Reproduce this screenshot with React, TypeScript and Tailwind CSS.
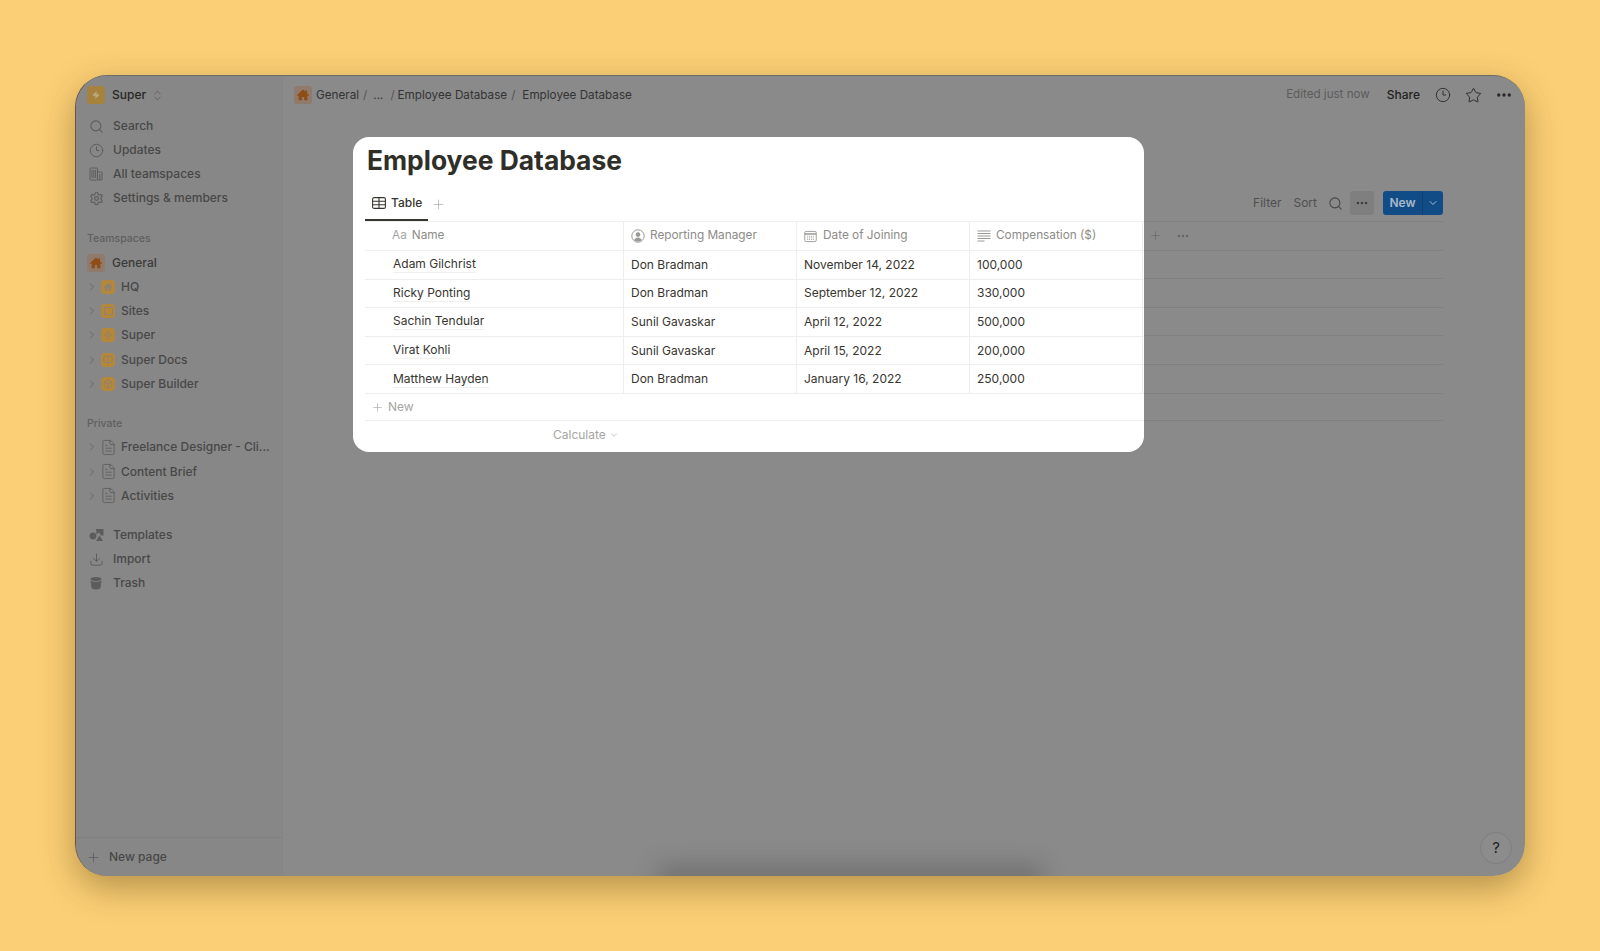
import type { ReactNode } from "react";
import {
  BookOpen,
  Box,
  ChevronDown,
  ChevronRight,
  ChevronsUpDown,
  Clock3,
  Download,
  Ellipsis,
  FileText,
  Plus,
  Search,
  Settings,
  Star,
  Zap,
} from "lucide-react";

const TEAMSPACES = [
  { name: "HQ", icon: "home" },
  { name: "Sites", icon: "square" },
  { name: "Super", icon: "zap" },
  { name: "Super Docs", icon: "book" },
  { name: "Super Builder", icon: "box" },
];

const EMPLOYEES = [
  { name: "Adam Gilchrist", manager: "Don Bradman", joined: "November 14, 2022", pay: "100,000" },
  { name: "Ricky Ponting", manager: "Don Bradman", joined: "September 12, 2022", pay: "330,000" },
  { name: "Sachin Tendular", manager: "Sunil Gavaskar", joined: "April 12, 2022", pay: "500,000" },
  { name: "Virat Kohli", manager: "Sunil Gavaskar", joined: "April 15, 2022", pay: "200,000" },
  { name: "Matthew Hayden", manager: "Don Bradman", joined: "January 16, 2022", pay: "250,000" },
];

function HomeGlyph({ className }: { className: string }) {
  return (
    <svg viewBox="0 0 16 16" className={className} fill="currentColor">
      <path d="M8 1.6 1 8.2l.9 1 1.1-1V14h3.700v-3.600h2.600V14H13V8.200l1.100 1 .9-1-2.400-2.300V2.500h-1.800v1.700z" />
    </svg>
  );
}

function HomeTile() {
  return (
    <span className="flex h-[18px] w-[18px] shrink-0 items-center justify-center rounded-[3px] bg-[#8f7a6c]">
      <HomeGlyph className="h-[14px] w-[14px] text-[#8f4c14]" />
    </span>
  );
}

function TeamIcon({ kind }: { kind: string }) {
  return (
    <span className="flex h-[14px] w-[14px] shrink-0 items-center justify-center rounded-[4px] bg-[#b58839] text-[#8c8172]">
      {kind === "home" && <HomeGlyph className="h-[10px] w-[10px]" />}
      {kind === "square" && <span className="h-[8px] w-[9px] rounded-[1px] border-[1.5px] border-[#8c8172]" />}
      {kind === "zap" && <Zap className="h-[10px] w-[10px]" strokeWidth={2} />}
      {kind === "book" && <BookOpen className="h-[10px] w-[10px]" strokeWidth={2} />}
      {kind === "box" && <Box className="h-[10px] w-[10px]" strokeWidth={2} />}
    </span>
  );
}

function TeamspacesIcon() {
  return (
    <svg viewBox="0 0 14 14" className="h-[14px] w-[14px]" fill="none" stroke="#5c5c5c" strokeWidth="1">
      <rect x="1" y="1" width="7.500" height="12" rx="0.800" />
      <rect x="8.500" y="5" width="4.500" height="8" rx="0.800" />
      <path d="M3 3v8M4.800 3v8M6.600 3v8M10.800 7v6" />
    </svg>
  );
}

function TemplatesIcon() {
  return (
    <svg viewBox="0 0 16 14" className="h-[14px] w-[16px]" fill="#5c5c5c">
      <circle cx="4" cy="8" r="3.400" />
      <path d="M7 1h7.500v6.500H12L10 4.500 7.600 6.400z" />
      <path d="M10.500 7.500 14 13H7z" />
    </svg>
  );
}

function TrashIcon() {
  return (
    <svg viewBox="0 0 14 14" className="h-[14px] w-[14px]" fill="#5c5c5c">
      <ellipse cx="7" cy="3" rx="5.500" ry="2" />
      <path d="M1.500 4.200c1 1 2.800 1.500 5.500 1.500s4.500-.5 5.500-1.500l-1 7.300c-.2 1.200-2 1.900-4.500 1.900s-4.300-.7-4.500-1.900z" />
    </svg>
  );
}

function TopNavRow({ icon, label }: { icon: ReactNode; label: string }) {
  return (
    <div className="flex h-[24.1px] items-center pl-[13px]">
      <span className="flex w-[21px] shrink-0 items-center">{icon}</span>
      <span className="ml-[3px] text-[12px] font-medium text-[#474747]">{label}</span>
    </div>
  );
}

function TreeRow({ icon, label }: { icon: ReactNode; label: string }) {
  return (
    <div className="flex h-[24.3px] items-center pl-[10px]">
      <ChevronRight className="h-[12px] w-[12px] shrink-0 text-[#5c5c5c]" strokeWidth={1.5} />
      <span className="ml-[3px] flex w-[14px] shrink-0 items-center justify-center">{icon}</span>
      <span className="ml-[6px] whitespace-nowrap text-[12px] font-medium text-[#474747]">{label}</span>
    </div>
  );
}

function SectionLabel({ children }: { children: string }) {
  return (
    <div className="flex h-[23px] items-center pl-[11px] text-[10.5px] font-medium text-[#5f5f5f]">{children}</div>
  );
}

function Sidebar() {
  const iconClass = "h-[15px] w-[15px] text-[#5c5c5c]";
  return (
    <aside className="flex w-[207px] shrink-0 flex-col border-r border-[#858585] bg-[#878787]">
      <div className="flex h-[38px] shrink-0 items-center pl-[11px]">
        <span className="flex h-[18px] w-[18px] items-center justify-center rounded-[3px] bg-[#a5833f]">
          <Zap className="h-[8px] w-[8px] text-[#bba97f]" fill="currentColor" />
        </span>
        <span className="ml-[7px] text-[12px] font-medium text-[#262626]">Super</span>
        <ChevronsUpDown className="ml-[5px] h-[13px] w-[13px] text-[#5a5a5a]" strokeWidth={1.5} />
      </div>
      <TopNavRow icon={<Search className={iconClass} strokeWidth={1.7} />} label="Search" />
      <TopNavRow icon={<Clock3 className={iconClass} strokeWidth={1.5} />} label="Updates" />
      <TopNavRow icon={<TeamspacesIcon />} label="All teamspaces" />
      <TopNavRow icon={<Settings className={iconClass} strokeWidth={1.8} />} label="Settings & members" />
      <div className="mt-[17px]">
        <SectionLabel>Teamspaces</SectionLabel>
      </div>
      <div className="flex h-[24.3px] items-center pl-[11px]">
        <HomeTile />
        <span className="ml-[7px] text-[12px] font-medium text-[#3a3a3a]">General</span>
      </div>
      {TEAMSPACES.map((team) => (
        <TreeRow key={team.name} icon={<TeamIcon kind={team.icon} />} label={team.name} />
      ))}
      <div className="mt-[16px]">
        <SectionLabel>Private</SectionLabel>
      </div>
      {["Freelance Designer - Cli...", "Content Brief", "Activities"].map((page) => (
        <TreeRow key={page} icon={<FileText className="h-[17px] w-[17px] shrink-0 text-[#5c5c5c]" strokeWidth={1.2} />} label={page} />
      ))}
      <div className="mt-[15px]">
        <TopNavRow icon={<TemplatesIcon />} label="Templates" />
        <TopNavRow icon={<Download className={iconClass} strokeWidth={1.5} />} label="Import" />
        <TopNavRow icon={<TrashIcon />} label="Trash" />
      </div>
      <div className="mt-auto flex h-[39px] items-center border-t border-[#808080] pl-[10px]">
        <Plus className="h-[15px] w-[15px] text-[#5a5a5a]" strokeWidth={1.2} />
        <span className="ml-[8px] text-[12px] font-medium text-[#474747]">New page</span>
      </div>
    </aside>
  );
}

function TopBar() {
  return (
    <div className="flex h-[38px] shrink-0 items-center justify-between pl-[11px] pr-[12px]">
      <div className="flex items-center text-[11.7px] text-[#333333]">
        <HomeTile />
        <div className="flex items-center pt-[2px]">
          <span className="ml-[4px]">General</span>
          <span className="ml-[4px] text-[#555555]">/</span>
          <span className="ml-[6px]">...</span>
          <span className="ml-[7px] text-[#555555]">/</span>
          <span className="ml-[3px]">Employee Database</span>
          <span className="ml-[4px] text-[#555555]">/</span>
          <span className="ml-[7px]">Employee Database</span>
        </div>
      </div>
      <div className="flex items-center">
        <span className="text-[11.6px] text-[#5c5c5c]">Edited just now</span>
        <span className="ml-[17px] text-[12px] font-medium text-[#1f1f1f]">Share</span>
        <Clock3 className="ml-[15px] h-[16px] w-[16px] text-[#262626]" strokeWidth={1.3} />
        <Star className="ml-[14px] h-[17px] w-[17px] text-[#262626]" strokeWidth={1.3} />
        <Ellipsis className="ml-[13px] h-[18px] w-[18px] text-[#262626]" strokeWidth={2.4} />
      </div>
    </div>
  );
}

function BackdropToolbar() {
  return (
    <div className="flex h-[107px] items-center justify-end pt-[71px] text-[12px] text-[#4f4f4f]">
      <span>Filter</span>
      <span className="ml-[12px]">Sort</span>
      <Search className="ml-[11px] h-[15px] w-[15px] text-[#454545]" strokeWidth={1.7} />
      <span className="ml-[7px] flex h-[24px] w-[24px] items-center justify-center rounded-[3px] bg-[#7f7f7f]">
        <Ellipsis className="h-[14px] w-[14px] text-[#3f3f3f]" strokeWidth={2.4} />
      </span>
      <span className="ml-[9px] flex h-[24px] w-[60px] items-center rounded-[3px] bg-[#124c86] text-[#a8bacb]">
        <span className="w-[40px] border-r border-[#0e4070] text-center font-semibold leading-[24px]">New</span>
        <ChevronDown className="ml-[4px] h-[12px] w-[12px]" strokeWidth={2} />
      </span>
    </div>
  );
}

function BackdropTable() {
  return (
    <div className="border-t border-[#808080]">
      <div className="flex h-[28.6px] items-center border-b border-[#808080] pl-[784px]">
        <Plus className="h-[13px] w-[13px] text-[#666666]" strokeWidth={1.3} />
        <Ellipsis className="ml-[14px] h-[14px] w-[14px] text-[#666666]" strokeWidth={2.2} />
      </div>
      {[0, 1, 2, 3, 4].map((row) => (
        <div key={row} className="h-[28.6px] border-b border-[#808080]" />
      ))}
      <div className="h-[27.5px] border-b border-[#808080]" />
    </div>
  );
}

function DatabaseModal() {
  const cols = "grid grid-cols-[259px_173px_173px_172.5px]";
  const cell = "flex items-center border-r border-[#eeeeed] pl-[7px]";
  return (
    <div className="absolute left-[277px] top-[61px] h-[315px] w-[791px] overflow-hidden rounded-[16px] bg-white pl-[12px]">
      <h1 className="pl-[2px] pt-[5px] text-[26.4px] font-bold leading-[36px] text-[#2f2e28]">Employee Database</h1>
      <div className="mt-[9px] flex h-[34px] items-center">
        <div className="flex h-[34px] w-[63px] items-center border-b-2 border-[#37352f] pl-[7px] text-[12px] font-medium text-[#37352f]">
          <svg viewBox="0 0 14 12" className="h-[12px] w-[14px]" fill="none" stroke="#37352f" strokeWidth="1.100">
            <rect x="0.600" y="0.600" width="12.800" height="10.800" rx="1.500" />
            <path d="M.6 4.200h12.800M.6 7.800h12.800M7 .6v10.800" />
          </svg>
          <span className="ml-[5px]">Table</span>
        </div>
        <Plus className="ml-[3px] h-[15px] w-[15px] text-[#a8a8a6]" strokeWidth={1.1} />
      </div>
      <div className="border-y border-[#eeeeed]">
        <div className={`${cols} h-[28px] text-[11.8px] text-[#8c8b88]`}>
          <div className="flex items-center border-r border-[#eeeeed] pl-[27px]">
            <span className="text-[#a6a5a2]">Aa</span>
            <span className="ml-[5px]">Name</span>
          </div>
          <div className={cell}>
            <svg viewBox="0 0 14 14" className="h-[14px] w-[14px]" fill="none" stroke="#9a9997" strokeWidth="1">
              <circle cx="7" cy="7" r="6.200" />
              <circle cx="7" cy="5.600" r="2.300" fill="#9a9997" stroke="none" />
              <path d="M3.200 11c.8-1.800 2.200-2.600 3.800-2.600s3 .8 3.800 2.600A5.500 5.500 0 0 1 3.200 11z" fill="#9a9997" stroke="none" />
            </svg>
            <span className="ml-[5px]">Reporting Manager</span>
          </div>
          <div className={cell}>
            <svg viewBox="0 0 14 14" className="h-[13px] w-[13px]" fill="none" stroke="#9a9997" strokeWidth="1">
              <rect x="0.800" y="1.500" width="12.400" height="11" rx="1.500" />
              <path d="M.8 4.200h12.400" strokeWidth="1.600" />
              <path d="M3.500 6.800h7M3.500 8.500h7M3.500 10.200h7" strokeDasharray="1 1" />
            </svg>
            <span className="ml-[6px]">Date of Joining</span>
          </div>
          <div className={cell}>
            <svg viewBox="0 0 14 12" className="h-[12px] w-[14px]" fill="none" stroke="#9a9997" strokeWidth="1">
              <path d="M.5 1h13M.5 3.500h13M.5 6h13M.5 8.500h13M.5 11h7" />
            </svg>
            <span className="ml-[5px]">Compensation ($)</span>
          </div>
        </div>
      </div>
      {EMPLOYEES.map((person) => (
        <div key={person.name} className={`${cols} h-[28.6px] border-b border-[#eeeeed] text-[12px] text-[#37352f]`}>
          <div className="flex items-center border-r border-[#eeeeed] pl-[28px]">
            <span className="border-b border-[#f0f0ef] leading-[16px]">{person.name}</span>
          </div>
          <div className={cell}>{person.manager}</div>
          <div className={cell}>{person.joined}</div>
          <div className={cell}>{person.pay}</div>
        </div>
      ))}
      <div className="flex h-[27.5px] items-center border-b border-[#eeeeed] pl-[6px] text-[12px] text-[#a6a5a2]">
        <Plus className="h-[13px] w-[13px]" strokeWidth={1.2} />
        <span className="ml-[4px]">New</span>
      </div>
      <div className="flex h-[27px] items-center pl-[188px] text-[12px] text-[#a6a5a2]">
        <span>Calculate</span>
        <ChevronDown className="ml-[3px] h-[10px] w-[10px]" strokeWidth={1.5} />
      </div>
    </div>
  );
}

export default function App() {
  return (
    <div className="h-[951px] overflow-hidden bg-[#fbcf75] px-[75px] pt-[75px] font-['Inter',sans-serif]">
      <div className="rounded-[32px] shadow-[0_12px_34px_rgba(60,40,0,0.36)]">
        <div className="relative flex h-[801px] overflow-hidden rounded-[32px] border-l border-t border-l-[#6f5048] border-t-[#6b6b6b] bg-[#8a8a8a]">
          <Sidebar />
          <main className="flex min-w-0 flex-1 flex-col">
            <TopBar />
            <div className="px-[82px]">
              <BackdropToolbar />
              <BackdropTable />
            </div>
          </main>
          <DatabaseModal />
          <div className="absolute bottom-[-14px] left-[582px] h-[24px] w-[385px] bg-black/20 blur-[12px]" />
          <div className="absolute bottom-[12px] right-[13px] flex h-[32px] w-[32px] items-center justify-center rounded-full border border-[#7f7f7f] bg-[#8c8c8c] text-[15px] text-[#1f1f1f]">
            ?
          </div>
        </div>
      </div>
    </div>
  );
}
